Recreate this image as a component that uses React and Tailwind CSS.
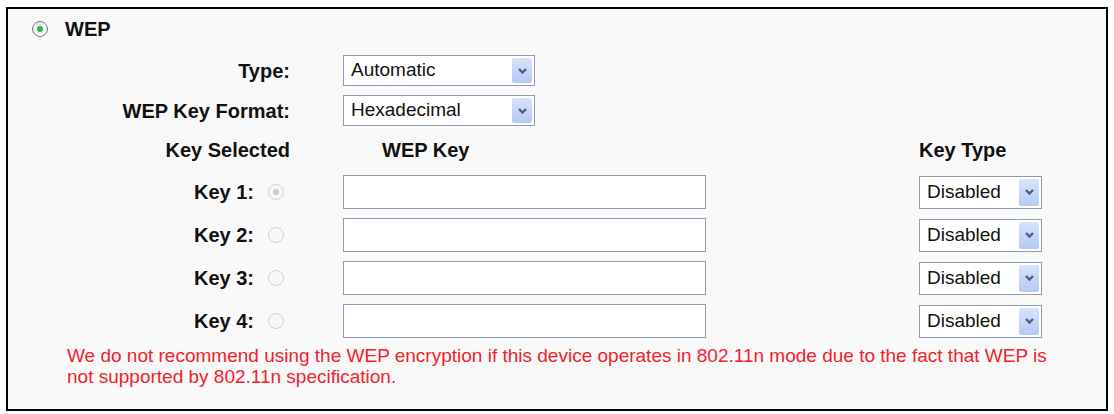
import React from 'react';

function Radio({ checked, disabled }) {
  return (
    <span
      className={
        disabled
          ? 'inline-flex h-[16px] w-[16px] shrink-0 items-center justify-center rounded-full border border-[#d2d2d2] bg-[#f7f7f7]'
          : 'inline-flex h-[16px] w-[16px] shrink-0 items-center justify-center rounded-full border border-[#6e7c8a] bg-gradient-to-br from-[#e2e5e9] to-white'
      }
    >
      {checked && (
        <span
          className={
            disabled
              ? 'h-[6px] w-[6px] rounded-full bg-[#cfcfcf]'
              : 'h-[6px] w-[6px] rounded-full bg-[#2eb34a]'
          }
        />
      )}
    </span>
  );
}

function Chevron() {
  return (
    <svg width="11" height="8" viewBox="0 0 11 8">
      <polyline points="2,2 5.5,5.5 9,2" fill="none" stroke="#4a5f86" strokeWidth="2.4" />
    </svg>
  );
}

function Select({ value, className }) {
  return (
    <div className={`flex items-stretch border border-[#8d9cb2] bg-white ${className}`}>
      <span className="flex flex-1 items-center pl-[7px] text-[19px] text-[#111]">{value}</span>
      <span className="m-[2px] flex w-[20px] items-center justify-center rounded-[2px] bg-gradient-to-b from-[#d8e3fb] to-[#b5c9f4]">
        <Chevron />
      </span>
    </div>
  );
}

const keys = [
  { label: 'Key 1:', checked: true },
  { label: 'Key 2:', checked: false },
  { label: 'Key 3:', checked: false },
  { label: 'Key 4:', checked: false },
];

export default function App() {
  return (
    <div
      className="min-h-[414px] bg-white pl-[6px] pt-[7px] text-[#111]"
      style={{ fontFamily: '"Liberation Sans", Arial, sans-serif' }}
    >
      <div className="flex h-[404px] w-[1102px] flex-col border-2 border-black bg-[#f9f9f9] pt-[9px]">
        {/* WEP header */}
        <div className="flex h-[22px] items-center pl-[24px]">
          <Radio checked />
          <span className="ml-[17px] text-[20px] font-bold">WEP</span>
        </div>

        {/* Type */}
        <div className="mt-[15px] flex h-[31px] items-center">
          <span className="w-[282px] text-right text-[20px] font-bold">Type:</span>
          <Select value="Automatic" className="ml-[53px] h-[31px] w-[192px]" />
        </div>

        {/* WEP Key Format */}
        <div className="mt-[9px] flex h-[31px] items-center">
          <span className="w-[282px] text-right text-[20px] font-bold">WEP Key Format:</span>
          <Select value="Hexadecimal" className="ml-[53px] h-[31px] w-[192px]" />
        </div>

        {/* Column headings */}
        <div className="mt-[12px] flex h-[24px] items-center text-[20px] font-bold">
          <span className="w-[282px] text-right">Key Selected</span>
          <span className="ml-[92px] w-[537px]">WEP Key</span>
          <span>Key Type</span>
        </div>

        {/* Keys */}
        <div className="mt-[13px] flex flex-col gap-[9px]">
          {keys.map((k) => (
            <div key={k.label} className="flex h-[34px] items-center">
              <span className="w-[246px] text-right text-[20px] font-bold">{k.label}</span>
              <span className="ml-[14px] flex">
                <Radio checked={k.checked} disabled />
              </span>
              <div className="ml-[59px] h-[34px] w-[363px] border border-[#8d9cb2] bg-white" />
              <Select value="Disabled" className="ml-[213px] h-[33px] w-[123px]" />
            </div>
          ))}
        </div>

        {/* Warning */}
        <p className="mt-[7px] pl-[59px] text-[19px] leading-[21px] text-[#f0222b]">
          We do not recommend using the WEP encryption if this device operates in 802.11n mode due to the fact that WEP is
          <br />
          not supported by 802.11n specification.
        </p>
      </div>
    </div>
  );
}
